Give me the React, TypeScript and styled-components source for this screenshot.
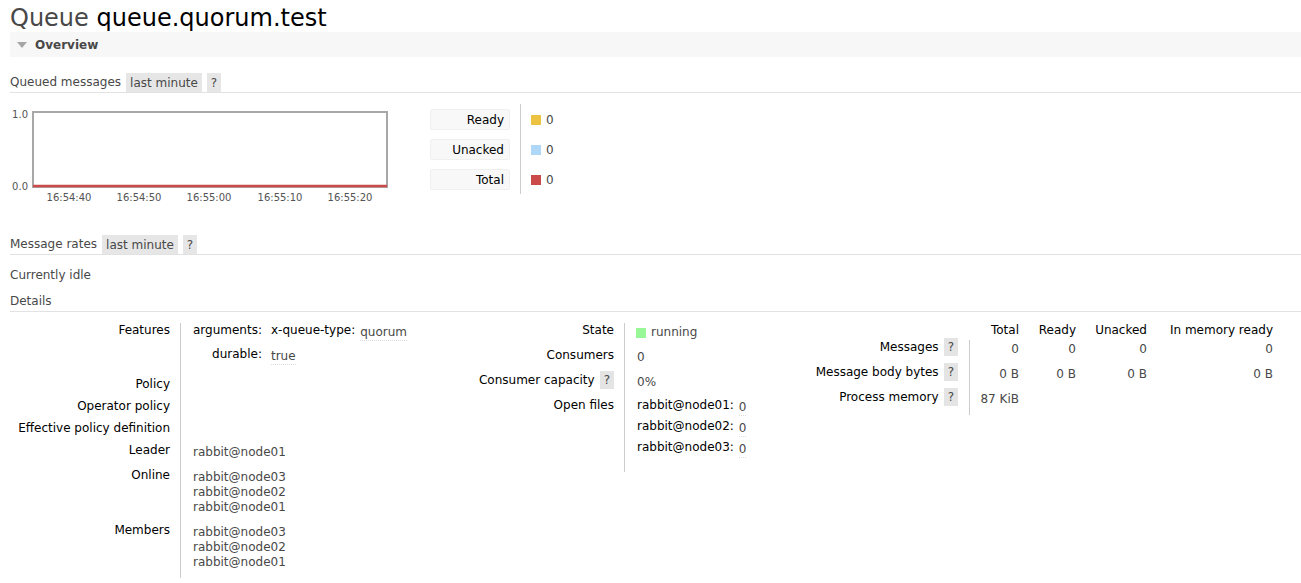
import React from 'react'
import styled, { createGlobalStyle } from 'styled-components'

const GlobalStyle = createGlobalStyle`
  html, body {
    margin: 0;
    padding: 0;
    background: #fff;
  }
  body {
    font: 12px "DejaVu Sans", Verdana, sans-serif;
    color: #484848;
  }
`

const Page = styled.div`
  padding: 0 0 0 10px;
`

const Title = styled.h1`
  margin: 0;
  padding-top: 4px;
  font-size: 24px;
  line-height: 28px;
  font-weight: normal;
  color: #484848;

  b {
    color: #000;
    font-weight: normal;
  }
`

const SectionBar = styled.div`
  display: flex;
  align-items: center;
  gap: 8px;
  height: 25px;
  padding-left: 7px;
  background: #f7f7f7;
  font-weight: bold;
  color: #484848;
`

const Heading = styled.div<{ $top: number }>`
  display: flex;
  align-items: center;
  gap: 5px;
  margin-top: ${p => p.$top}px;
  height: 19px;
  line-height: 21px;
  border-bottom: 1px solid #e2e2e2;
`

const Chip = styled.span`
  height: 19px;
  padding: 0 4px;
  background: #e6e6e6;
  color: #484848;
`

const Help = styled.span`
  margin-left: 5px;
  padding: 2px 4px;
  background: #e4e4e4;
  color: #484848;
`

const ChartRow = styled.div`
  display: flex;
  align-items: flex-start;
  margin-top: 11px;
`

const Legend = styled.div`
  display: grid;
  grid-template-columns: 90px auto;
  margin-left: 30px;
`

const LegendLabel = styled.div`
  padding: 5px 10px 4px 0;
`

const LegendBox = styled.div`
  width: 80px;
  height: 21px;
  box-sizing: border-box;
  padding-right: 5px;
  text-align: right;
  line-height: 21px;
  background: #f8f8f8;
  border: 1px solid #f0f0f0;
  border-radius: 2px;
  color: #000;
`

const LegendValue = styled.div`
  display: flex;
  align-items: center;
  gap: 5px;
  padding: 2px 0 0 10px;
  border-left: 1px solid #ccc;
`

const Swatch = styled.span<{ $color: string }>`
  width: 10px;
  height: 10px;
  background: ${p => p.$color};
`

const Paragraph = styled.div<{ $top: number }>`
  margin-top: ${p => p.$top}px;
  line-height: 19px;
`

const Details = styled.div`
  display: flex;
  align-items: flex-start;
  margin-top: 11px;
`

const Facts = styled.div<{ $cols: string }>`
  display: grid;
  grid-template-columns: ${p => p.$cols};
  line-height: 15px;
`

const Key = styled.div`
  padding: 0 10px 7px 0;
  text-align: right;
  color: #000;
`

const Value = styled.div<{ $nested?: boolean; $bottom?: number }>`
  padding: ${p => (p.$nested ? 0 : 2)}px 0 ${p => p.$bottom ?? 8}px 12px;
  border-left: 1px solid #ccc;
`

const Sub = styled.div<{ $pitch: number }>`
  display: grid;
  grid-template-columns: auto auto;
  justify-content: start;
  grid-auto-rows: ${p => p.$pitch}px;
`

const SubKey = styled.div<{ $gap: number }>`
  padding-right: ${p => p.$gap}px;
  text-align: right;
  color: #000;
`

const SubValue = styled.div`
  display: flex;
  align-items: flex-start;
  gap: 5px;
`

const Lifted = styled.span`
  margin-top: 2px;
  border-bottom: 1px dotted #ddd;
  color: #484848;
`

const Dark = styled.span`
  color: #000;
`

const StateValue = styled.div`
  display: flex;
  align-items: center;
  gap: 5px;
`

const StatusDot = styled.span`
  width: 10px;
  height: 10px;
  margin-left: -1px;
  background: #98f898;
`

const HeadCell = styled.div`
  padding-bottom: 2px;
  text-align: right;
  color: #000;
`

const RowKey = styled.div`
  padding: 0 11px 10px 0;
  text-align: right;
  color: #000;
`

const Num = styled.div<{ $first?: boolean }>`
  padding-top: 2px;
  text-align: right;
  ${p => p.$first && 'border-left: 1px solid #ccc;'}
`

const Chart = () => {
  const ticks = [
    { x: 59, t: '16:54:40' },
    { x: 129, t: '16:54:50' },
    { x: 199, t: '16:55:00' },
    { x: 270, t: '16:55:10' },
    { x: 340, t: '16:55:20' },
  ]
  return (
    <svg width="390" height="100" style={{ display: 'block', fontFamily: '"DejaVu Sans", sans-serif' }}>
      <text x="18" y="14" fontSize="10" fill="#545454" textAnchor="end">1.0</text>
      <text x="18" y="86" fontSize="10" fill="#545454" textAnchor="end">0.0</text>
      <rect x="23" y="8" width="354" height="75" fill="#fff" stroke="#a8a8a8" strokeWidth="2" />
      <line x1="23" y1="82" x2="377" y2="82" stroke="#cb4b4b" strokeWidth="2.5" />
      {ticks.map(k => (
        <text key={k.t} x={k.x} y="97" fontSize="10" fill="#545454" textAnchor="middle">{k.t}</text>
      ))}
    </svg>
  )
}

const legend = [
  { label: 'Ready', color: '#edc240' },
  { label: 'Unacked', color: '#afd8f8' },
  { label: 'Total', color: '#cb4b4b' },
]

const nodes = ['rabbit@node03', 'rabbit@node02', 'rabbit@node01']

export default function App() {
  return (
    <Page>
      <GlobalStyle />
      <Title>Queue <b>queue.quorum.test</b></Title>
      <SectionBar>
        <svg width="10" height="6" viewBox="0 0 10 6">
          <polygon points="0,0 10,0 5,6" fill="#a6a6a6" />
        </svg>
        Overview
      </SectionBar>

      <Heading $top={16}>
        Queued messages <Chip>last minute</Chip><Chip>?</Chip>
      </Heading>
      <ChartRow>
        <Chart />
        <Legend>
          {legend.map(l => (
            <React.Fragment key={l.label}>
              <LegendLabel><LegendBox>{l.label}</LegendBox></LegendLabel>
              <LegendValue><Swatch $color={l.color} />0</LegendValue>
            </React.Fragment>
          ))}
        </Legend>
      </ChartRow>

      <Heading $top={31}>
        Message rates <Chip>last minute</Chip><Chip>?</Chip>
      </Heading>
      <Paragraph $top={11}>Currently idle</Paragraph>
      <Heading $top={7}>Details</Heading>

      <Details>
        <Facts $cols="170px 290px">
          <Key>Features</Key>
          <Value $nested $bottom={6}>
            <Sub $pitch={24}>
              <SubKey $gap={9}>arguments:</SubKey>
              <SubValue><Dark>x-queue-type:</Dark><Lifted>quorum</Lifted></SubValue>
              <SubKey $gap={9}>durable:</SubKey>
              <SubValue><Lifted>true</Lifted></SubValue>
            </Sub>
          </Value>
          <Key>Policy</Key>
          <Value />
          <Key>Operator policy</Key>
          <Value />
          <Key>Effective policy definition</Key>
          <Value />
          <Key>Leader</Key>
          <Value>rabbit@node01</Value>
          <Key>Online</Key>
          <Value>{nodes.map(n => <div key={n}>{n}</div>)}</Value>
          <Key>Members</Key>
          <Value>{nodes.map(n => <div key={n}>{n}</div>)}</Value>
        </Facts>

        <Facts $cols="154px 186px">
          <Key>State</Key>
          <Value><StateValue><StatusDot />running</StateValue></Value>
          <Key>Consumers</Key>
          <Value>0</Value>
          <Key>Consumer capacity<Help>?</Help></Key>
          <Value>0%</Value>
          <Key>Open files</Key>
          <Value $nested $bottom={11}>
            <Sub $pitch={21}>
              {['rabbit@node01:', 'rabbit@node02:', 'rabbit@node03:'].map(n => (
                <React.Fragment key={n}>
                  <SubKey $gap={5}>{n}</SubKey>
                  <SubValue><Lifted>0</Lifted></SubValue>
                </React.Fragment>
              ))}
            </Sub>
          </Value>
        </Facts>

        <Facts $cols="159px 50px 57px 71px 126px">
          <div />
          <HeadCell>Total</HeadCell>
          <HeadCell>Ready</HeadCell>
          <HeadCell>Unacked</HeadCell>
          <HeadCell>In memory ready</HeadCell>

          <RowKey>Messages<Help>?</Help></RowKey>
          <Num $first>0</Num>
          <Num>0</Num>
          <Num>0</Num>
          <Num>0</Num>

          <RowKey>Message body bytes<Help>?</Help></RowKey>
          <Num $first>0 B</Num>
          <Num>0 B</Num>
          <Num>0 B</Num>
          <Num>0 B</Num>

          <RowKey>Process memory<Help>?</Help></RowKey>
          <Num $first>87 KiB</Num>
          <Num />
          <Num />
          <Num />
        </Facts>
      </Details>
    </Page>
  )
}
